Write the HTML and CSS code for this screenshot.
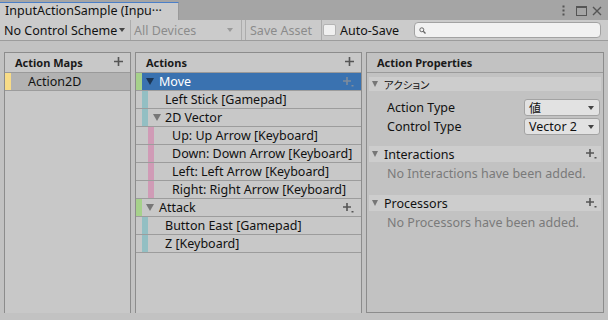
FILE: index.html
```html
<!DOCTYPE html>
<html lang="ja">
<head>
    <meta charset="UTF-8">
    <title>InputActionSample</title>
    <meta name="viewport" content="width=device-width, initial-scale=1.0">
    <link rel="stylesheet" href="styles.css">
</head>
<body>
    <div class="titlebar">
        <div class="tab">InputActionSample (Inpu···</div>
        <div class="wincontrols">
            <svg class="menu" width="3" height="11" viewBox="0 0 3 11"><rect x="0.5" y="0.5" width="2" height="2" fill="#555"/><rect x="0.5" y="4.5" width="2" height="2" fill="#555"/><rect x="0.5" y="8.5" width="2" height="2" fill="#555"/></svg>
            <svg class="max" width="11" height="10" viewBox="0 0 11 10"><rect x="0.5" y="0.5" width="10" height="9" fill="none" stroke="#555"/><rect x="0" y="0" width="11" height="2" fill="#555"/></svg>
            <svg class="close" width="10" height="10" viewBox="0 0 10 10"><path d="M1 1 L9 9 M9 1 L1 9" stroke="#555" stroke-width="1.4"/></svg>
        </div>
    </div>

    <div class="toolbar">
        <div class="tb-item scheme">No Control Scheme<span class="caret dark"></span></div>
        <div class="tb-item devices disabled">All Devices<span class="caret"></span></div>
        <div class="tb-item spacer"></div>
        <div class="tb-item save disabled">Save Asset</div>
        <span class="checkbox"></span>
        <span class="autosave">Auto-Save</span>
        <div class="search">
            <svg width="7" height="7" viewBox="0 0 7 7"><circle cx="2.8" cy="2.8" r="2" fill="none" stroke="#666" stroke-width="1"/><path d="M4.3 4.3 L6.5 6.5" stroke="#666" stroke-width="1.3"/></svg>
        </div>
    </div>

    <div class="main">
        <div class="panel maps">
            <div class="panel-head">Action Maps<svg class="plus" width="9" height="9" viewBox="0 0 9 9"><path d="M4.5 0 V9 M0 4.5 H9" stroke="#555" stroke-width="1.6"/></svg></div>
            <div class="row map-selected"><span class="bar yellow"></span><span class="label">Action2D</span></div>
        </div>

        <div class="panel actions">
            <div class="panel-head">Actions<svg class="plus" width="9" height="9" viewBox="0 0 9 9"><path d="M4.5 0 V9 M0 4.5 H9" stroke="#555" stroke-width="1.6"/></svg></div>

            <div class="row action selected">
                <span class="bar green"></span><span class="tri dark"></span><span class="label">Move</span>
                <svg class="addmore" width="11" height="10" viewBox="0 0 11 10"><path d="M4 0 V8 M0 4 H8" stroke="#7f8c9c" stroke-width="1.6"/><rect x="8.5" y="8" width="2" height="1.5" fill="#7f8c9c"/></svg>
            </div>
            <div class="row binding"><span class="bar teal"></span><span class="label">Left Stick [Gamepad]</span></div>
            <div class="row composite"><span class="bar teal"></span><span class="tri"></span><span class="label">2D Vector</span></div>
            <div class="row part"><span class="bar pink"></span><span class="label">Up: Up Arrow [Keyboard]</span></div>
            <div class="row part"><span class="bar pink"></span><span class="label">Down: Down Arrow [Keyboard]</span></div>
            <div class="row part"><span class="bar pink"></span><span class="label">Left: Left Arrow [Keyboard]</span></div>
            <div class="row part"><span class="bar pink"></span><span class="label">Right: Right Arrow [Keyboard]</span></div>
            <div class="row action">
                <span class="bar green"></span><span class="tri"></span><span class="label">Attack</span>
                <svg class="addmore" width="11" height="10" viewBox="0 0 11 10"><path d="M4 0 V8 M0 4 H8" stroke="#555" stroke-width="1.6"/><rect x="8.5" y="8" width="2" height="1.5" fill="#555"/></svg>
            </div>
            <div class="row binding"><span class="bar teal"></span><span class="label">Button East [Gamepad]</span></div>
            <div class="row binding"><span class="bar teal"></span><span class="label">Z [Keyboard]</span></div>
        </div>

        <div class="panel props">
            <div class="panel-head">Action Properties</div>
            <div class="section-head first"><span class="tri"></span><span class="jp">アクション</span></div>
            <div class="field first-field">
                <span class="field-label">Action Type</span>
                <div class="dropdown"><span class="jp-val">値</span><span class="caret dark"></span></div>
            </div>
            <div class="field">
                <span class="field-label">Control Type</span>
                <div class="dropdown"><span>Vector 2</span><span class="caret dark"></span></div>
            </div>

            <div class="section-head after-fields"><span class="tri"></span><span>Interactions</span>
                <svg class="addmore" width="11" height="10" viewBox="0 0 11 10"><path d="M4 0 V8 M0 4 H8" stroke="#555" stroke-width="1.6"/><rect x="8.5" y="8" width="2" height="1.5" fill="#555"/></svg>
            </div>
            <div class="empty">No Interactions have been added.</div>

            <div class="section-head"><span class="tri"></span><span>Processors</span>
                <svg class="addmore" width="11" height="10" viewBox="0 0 11 10"><path d="M4 0 V8 M0 4 H8" stroke="#555" stroke-width="1.6"/><rect x="8.5" y="8" width="2" height="1.5" fill="#555"/></svg>
            </div>
            <div class="empty">No Processors have been added.</div>
        </div>
    </div>
</body>
</html>
```

FILE: styles.css
```css
* {
    margin: 0;
    padding: 0;
    box-sizing: border-box;
}
body {
    width: 608px;
    height: 320px;
    overflow: hidden;
    background: #c2c2c2;
    font-family: "Noto Sans", "Noto Sans CJK JP", sans-serif;
    font-size: 12px;
    color: #111;
}

/* window title + tab */
.titlebar {
    height: 20px;
    background: #a5a5a5;
    display: flex;
    justify-content: space-between;
}
.tab {
    margin-top: 2px;
    width: 179px;
    height: 18px;
    border-top: 1px solid #4b7fc8;
    border-right: 1px solid #9a9a9a;
    background: #cbcbcb;
    padding-left: 5px;
    line-height: 16px;
    font-size: 12.5px;
    white-space: nowrap;
    overflow: hidden;
}
.wincontrols {
    display: flex;
    align-items: center;
    padding-right: 6px;
    padding-top: 1px;
}
.wincontrols svg {
    display: block;
}
.wincontrols .max {
    margin-left: 11px;
}
.wincontrols .close {
    margin-left: 5px;
}

/* toolbar */
.toolbar {
    height: 21px;
    background: #cbcbcb;
    border-bottom: 1px solid #9c9c9c;
    display: flex;
    align-items: center;
    font-size: 12.5px;
}
.tb-item {
    display: flex;
    align-items: center;
    height: 100%;
    border-right: 1px solid #acacac;
    white-space: nowrap;
}
.scheme {
    width: 131px;
    padding-left: 4px;
}
.devices {
    width: 111px;
    padding-left: 3px;
}
.spacer {
    width: 4px;
}
.save {
    width: 76px;
    padding-left: 4px;
}
.disabled {
    color: #8b8b8b;
}
.caret {
    width: 0;
    height: 0;
    border-left: 3.5px solid transparent;
    border-right: 3.5px solid transparent;
    border-top: 4px solid #9a9a9a;
    margin-left: auto;
    margin-right: 8px;
}
.scheme .caret {
    margin-left: 2px;
}
.caret.dark {
    border-top-color: #444;
}
.checkbox {
    width: 13px;
    height: 12px;
    margin-left: 1px;
    background: #f0f0f0;
    border: 1px solid #b4b4b4;
    border-radius: 2px;
}
.autosave {
    margin-left: 4px;
}
.search {
    margin-left: auto;
    margin-right: 7px;
    width: 187px;
    height: 16px;
    background: #f1f1f1;
    border: 1px solid #a2a2a2;
    border-radius: 4px;
    display: flex;
    align-items: center;
    padding-left: 4px;
}

/* panels */
.main {
    height: 278px;
    display: flex;
    gap: 4px;
    padding: 11px 4px 6px 4px;
}
.panel {
    border: 1px solid #8c8c8c;
    background: #c8c8c8;
}
.maps {
    width: 127px;
    border-bottom: none;
}
.actions {
    width: 227px;
    border-bottom: none;
}
.props {
    width: 238px;
    background: #c2c2c2;
}
.panel-head {
    height: 20px;
    border-bottom: 1px solid #9a9a9a;
    display: flex;
    align-items: center;
    padding-left: 10px;
    padding-right: 7px;
    font-weight: bold;
    font-size: 11px;
    color: #1a1a1a;
}
.plus {
    margin-left: auto;
    margin-top: -3px;
}

/* tree rows */
.row {
    height: 18px;
    border-bottom: 1px solid #9c9c9c;
    display: flex;
    align-items: stretch;
    white-space: nowrap;
    font-size: 12.5px;
}
.row .label {
    line-height: 17px;
}
.bar {
    width: 6px;
}
.yellow { background: #f8dc87; }
.green { background: #a6d18b; }
.teal { background: #93bfc3; }
.pink { background: #d09bb6; }

.map-selected {
    background: #b2b2b2;
}
.map-selected .label {
    margin-left: 17px;
}
.tri {
    align-self: center;
    width: 0;
    height: 0;
    border-left: 4px solid transparent;
    border-right: 4px solid transparent;
    border-top: 7px solid #777;
}
.tri.dark {
    border-top-color: #1b3553;
}
.action .tri {
    margin-left: 4px;
}
.action .label {
    margin-left: 5px;
}
.selected {
    background: #3a72b0;
    color: #fff;
}
.binding .bar {
    margin-left: 6px;
}
.binding .label {
    margin-left: 17px;
}
.composite .bar {
    margin-left: 6px;
}
.composite .tri {
    margin-left: 5px;
}
.composite .label {
    margin-left: 4px;
}
.part .bar {
    margin-left: 12px;
}
.part .label {
    margin-left: 18px;
}
.addmore {
    align-self: center;
    margin-left: auto;
    margin-right: 7px;
}

/* properties */
.section-head {
    height: 16px;
    margin: 9px 2px 0 2px;
    background: #cdcdcd;
    display: flex;
    align-items: center;
    padding-left: 3px;
    font-size: 12.5px;
}
.section-head.first {
    margin-top: 4px;
    height: 14px;
}
.section-head.after-fields {
    margin-top: 10px;
}
.section-head .tri {
    border-left-width: 3.5px;
    border-right-width: 3.5px;
    border-top-width: 6px;
    margin-right: 6px;
}
.section-head .addmore {
    margin-right: 4px;
}
.jp {
    font-family: "Noto Sans CJK JP", sans-serif;
    font-size: 10.5px;
    font-feature-settings: "palt";
}
.field {
    display: flex;
    align-items: center;
    height: 19px;
    padding-left: 20px;
    padding-right: 3px;
    font-size: 12.5px;
}
.first-field {
    margin-top: 7px;
}
.dropdown {
    margin-left: auto;
    width: 76px;
    height: 17px;
    background: #e2e2e2;
    border: 1px solid #a3a3a3;
    border-radius: 3px;
    display: flex;
    align-items: center;
    padding-left: 4px;
}
.dropdown .caret {
    margin-right: 5px;
}
.jp-val {
    font-family: "Noto Sans CJK JP", sans-serif;
    font-size: 12px;
}
.empty {
    padding-left: 20px;
    height: 24px;
    line-height: 24px;
    color: #7a7a7a;
    font-size: 12.5px;
}
```
